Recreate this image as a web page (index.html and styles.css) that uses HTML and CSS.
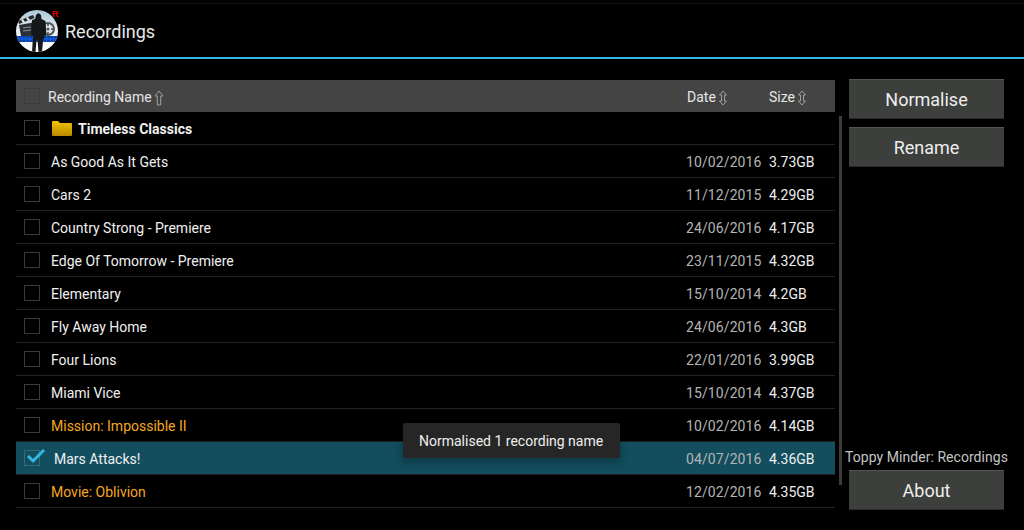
FILE: index.html
```html
<!DOCTYPE html>
<html>
<head>
  <title>Recordings</title>
  <meta charset="UTF-8">
  <link rel="stylesheet" href="styles.css">
</head>
<body>
  <div class="action-bar">
    <svg class="logo" width="46" height="46" viewBox="0 0 46 46">
      <defs>
        <clipPath id="disc"><circle cx="21" cy="23" r="21"/></clipPath>
        <linearGradient id="sky" x1="0" y1="0" x2="0" y2="1"><stop offset="0" stop-color="#a9c6d8"/><stop offset="0.5" stop-color="#f0f5f8"/><stop offset="1" stop-color="#ffffff"/></linearGradient>
      </defs>
      <g clip-path="url(#disc)">
        <rect width="42" height="46" y="2" fill="url(#sky)"/>
        <!-- clapper board -->
        <path d="M2 13L17 7l1.500 3L3 16z" fill="#23272b"/>
        <path d="M5 12l2-1 2 3-2 1zM10 10l2-1 2 3-2 1z" fill="#e6e6e6"/>
        <path d="M3 17l17-3v14H5z" fill="#2c3034"/>
        <path d="M7 20l8-1M7 23l8-1" stroke="#8a9299"/>
        <!-- film reel -->
        <circle cx="32" cy="21" r="6" fill="#dfe4e7" stroke="#4b5258" stroke-width="2"/>
        <circle cx="32" cy="21" r="1.500" fill="#4b5258"/>
        <path d="M32 16v2M32 24v2M27 21h2M35 21h2" stroke="#4b5258" stroke-width="1.600"/>
        <!-- film strip -->
        <rect x="0" y="28" width="42" height="6" fill="#0f58d6"/>
        <path d="M0 29h42M0 33h42" stroke="#06245e" stroke-width="1.200" stroke-dasharray="2 1.500"/>
        <!-- man -->
        <path d="M19 11l1-4 2.500-2 2.500 2 .5 4 4 2 1 14-2 1-1.500 5-1 11h-3.500l-1-12h-1l-1 12h-3.500l1-16-2-3 1-13z" fill="#15181a"/>
      </g>
      <text class="logo-mark" x="36" y="9">R</text>
    </svg>
    <div class="title">Recordings</div>
  </div>
  <div class="content">
    <div class="list-panel">
      <div class="list-header">
        <span class="check header-check"></span>
        <span class="head-name">Recording Name<svg class="sort" width="10" height="16" viewBox="0 0 10 16"><path d="M5 1L9 6H6.700V15H3.300V6H1z" fill="none" stroke="#a0a0a0"/></svg></span>
        <span class="head-date">Date<svg class="sort" width="10" height="16" viewBox="0 0 10 16"><path d="M5 1L8.500 5H6.500V11H8.500L5 15L1.500 11H3.500V5H1.500z" fill="none" stroke="#a0a0a0"/></svg></span>
        <span class="head-size">Size<svg class="sort" width="10" height="16" viewBox="0 0 10 16"><path d="M5 1L8.500 5H6.500V11H8.500L5 15L1.500 11H3.500V5H1.500z" fill="none" stroke="#a0a0a0"/></svg></span>
      </div>
      <div class="row folder">
        <span class="check"></span>
        <svg class="folder-icon" width="20" height="16" viewBox="0 0 20 16">
          <defs><linearGradient id="fold" x1="0" y1="0" x2="0" y2="1"><stop offset="0" stop-color="#f5c400"/><stop offset="1" stop-color="#b98a00"/></linearGradient></defs>
          <path d="M0 2a1 1 0 0 1 1-1h5l2 2h11a1 1 0 0 1 1 1v11a1 1 0 0 1-1 1H1a1 1 0 0 1-1-1z" fill="url(#fold)"/>
        </svg>
        <span class="name">Timeless Classics</span>
      </div>
      <div class="row"><span class="check"></span><span class="name">As Good As It Gets</span><span class="date">10/02/2016</span><span class="size">3.73GB</span></div>
      <div class="row"><span class="check"></span><span class="name">Cars 2</span><span class="date">11/12/2015</span><span class="size">4.29GB</span></div>
      <div class="row"><span class="check"></span><span class="name">Country Strong - Premiere</span><span class="date">24/06/2016</span><span class="size">4.17GB</span></div>
      <div class="row"><span class="check"></span><span class="name">Edge Of Tomorrow - Premiere</span><span class="date">23/11/2015</span><span class="size">4.32GB</span></div>
      <div class="row"><span class="check"></span><span class="name">Elementary</span><span class="date">15/10/2014</span><span class="size">4.2GB</span></div>
      <div class="row"><span class="check"></span><span class="name">Fly Away Home</span><span class="date">24/06/2016</span><span class="size">4.3GB</span></div>
      <div class="row"><span class="check"></span><span class="name">Four Lions</span><span class="date">22/01/2016</span><span class="size">3.99GB</span></div>
      <div class="row"><span class="check"></span><span class="name">Miami Vice</span><span class="date">15/10/2014</span><span class="size">4.37GB</span></div>
      <div class="row orange"><span class="check"></span><span class="name">Mission: Impossible II</span><span class="date">10/02/2016</span><span class="size">4.14GB</span></div>
      <div class="row selected">
        <span class="check">
          <svg class="tick" width="22" height="16" viewBox="0 0 22 16"><path d="M3 7l5 5L19 1" fill="none" stroke="#33b5e5" stroke-width="3"/></svg>
        </span>
        <span class="name">Mars Attacks!</span><span class="date">04/07/2016</span><span class="size">4.36GB</span>
      </div>
      <div class="row orange"><span class="check"></span><span class="name">Movie: Oblivion</span><span class="date">12/02/2016</span><span class="size">4.35GB</span></div>
      <div class="scrollbar"></div>
      <div class="toast">Normalised 1 recording name</div>
    </div>
    <div class="side">
      <button class="btn">Normalise</button>
      <button class="btn">Rename</button>
      <div class="side-label">Toppy Minder: Recordings</div>
      <button class="btn">About</button>
    </div>
  </div>
</body>
</html>
```

FILE: styles.css
```css
body {
  font-family: Roboto, "Noto Sans", sans-serif;
  margin: 0;
  height: 530px;
  overflow: hidden;
  background-color: #000000;
  color: #ffffff;
}
.action-bar {
  position: relative;
  box-sizing: border-box;
  height: 59px;
  display: flex;
  align-items: center;
  border-bottom: 2px solid #33b5e5;
  padding: 5px 0 0 16px;
}
.action-bar::before {
  content: "";
  position: absolute;
  left: 0;
  right: 0;
  top: 3px;
  height: 1px;
  background-color: #141414;
}
.logo {
  margin-right: 3px;
}
.logo-mark {
  font-family: "Liberation Sans", sans-serif;
  font-size: 9px;
  font-weight: bold;
  fill: #e00000;
}
.title {
  font-size: 18px;
  color: #e8e8e8;
}
.content {
  display: flex;
  padding: 21px 20px 0 16px;
}
.list-panel {
  position: relative;
  width: 819px;
}
.list-header {
  height: 32px;
  display: flex;
  align-items: center;
  background-color: #444444;
  font-size: 14px;
  color: #e6e6e6;
}
.list-header span + span {
  padding-top: 2px;
}
.header-check {
  border-color: #707070;
}
.sort {
  margin-left: 2px;
  vertical-align: -4px;
}
.head-name {
  margin-left: 8px;
  flex: 1;
}
.head-date {
  width: 82px;
}
.head-size {
  width: 66px;
}
.check {
  box-sizing: border-box;
  width: 16px;
  height: 16px;
  margin-left: 8px;
  border: 1px solid #3a3a3a;
  flex: none;
  position: relative;
}
.tick {
  position: absolute;
  left: 0;
  top: -2px;
}
.row {
  box-sizing: border-box;
  height: 33px;
  display: flex;
  align-items: center;
  border-bottom: 1px solid #222222;
  font-size: 14px;
  color: #f0f0f0;
}
.name {
  flex: 1;
  margin-left: 11px;
  padding-top: 2px;
}
.date {
  width: 83px;
  padding-top: 2px;
  color: #b4b4b4;
  letter-spacing: 0.1px;
}
.size {
  width: 66px;
  padding-top: 2px;
  color: #eeeeee;
}
.folder .name {
  font-weight: bold;
  margin-left: 6px;
}
.folder-icon {
  margin-left: 12px;
}
.orange .name {
  color: #f5a623;
}
.selected {
  background-color: #134e5e;
}
.selected .name {
  margin-left: 14px;
}
.selected .check {
  border-color: #2f6b7c;
}
.scrollbar {
  position: absolute;
  left: 823px;
  top: 36px;
  width: 3px;
  height: 369px;
  background-color: #3c3c3c;
}
.toast {
  position: absolute;
  left: 387px;
  top: 343px;
  padding: 10px 17px 8px 16px;
  height: 17px;
  line-height: 17px;
  font-size: 14px;
  background-color: #262626;
  color: #eeeeee;
  border-radius: 2px;
  box-shadow: 0 3px 6px 3px rgba(0, 0, 0, 0.2);
}
.side {
  width: 155px;
  height: 431px;
  margin-left: 14px;
  margin-top: -1px;
  display: flex;
  flex-direction: column;
  gap: 8px;
}
.btn {
  box-sizing: border-box;
  height: 40px;
  padding: 0;
  border: none;
  border-top: 1px solid #555555;
  border-bottom: 1px solid #2a2a2a;
  background-color: #3d3f3d;
  color: #eeeeee;
  font-family: inherit;
  font-size: 18px;
}
.side-label {
  margin-top: auto;
  margin-left: -4px;
  margin-bottom: -3px;
  white-space: nowrap;
  font-size: 14px;
  letter-spacing: 0.05px;
  color: #c4c4c4;
}
```
